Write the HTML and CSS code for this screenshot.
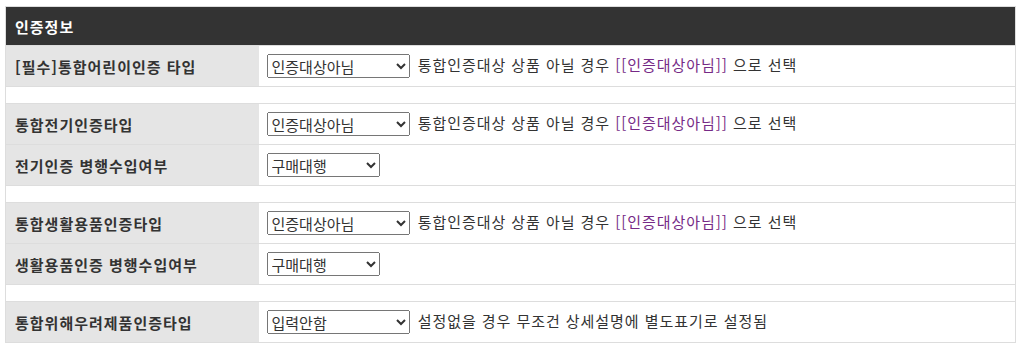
FILE: index.html
```html
<!DOCTYPE html>
<html lang="ko">
<head>
  <meta charset="UTF-8" />
  <meta name="viewport" content="width=device-width, initial-scale=1.0"/>
  <title>인증정보</title>
  <link rel="stylesheet" href="styles.css">
</head>
<body>

  <table class="cert-table">
    <tr>
      <th colspan="2" class="cert-head">인증정보</th>
    </tr>

    <tr>
      <td class="label">[필수]통합어린이인증 타입</td>
      <td class="value">
        <select class="sel">
          <option>인증대상아님</option>
        </select>
        통합인증대상 상품 아닐 경우 <span class="hint">[[인증대상아님]]</span> 으로 선택
      </td>
    </tr>
    <tr class="gap"><td colspan="2"></td></tr>

    <tr>
      <td class="label">통합전기인증타입</td>
      <td class="value">
        <select class="sel">
          <option>인증대상아님</option>
        </select>
        통합인증대상 상품 아닐 경우 <span class="hint">[[인증대상아님]]</span> 으로 선택
      </td>
    </tr>
    <tr>
      <td class="label">전기인증 병행수입여부</td>
      <td class="value">
        <select class="sel sel-short">
          <option>구매대행</option>
        </select>
      </td>
    </tr>
    <tr class="gap"><td colspan="2"></td></tr>

    <tr>
      <td class="label">통합생활용품인증타입</td>
      <td class="value">
        <select class="sel">
          <option>인증대상아님</option>
        </select>
        통합인증대상 상품 아닐 경우 <span class="hint">[[인증대상아님]]</span> 으로 선택
      </td>
    </tr>
    <tr>
      <td class="label">생활용품인증 병행수입여부</td>
      <td class="value">
        <select class="sel sel-short">
          <option>구매대행</option>
        </select>
      </td>
    </tr>
    <tr class="gap"><td colspan="2"></td></tr>

    <tr>
      <td class="label">통합위해우려제품인증타입</td>
      <td class="value">
        <select class="sel">
          <option>입력안함</option>
        </select>
        설정없을 경우 무조건 상세설명에 별도표기로 설정됨
      </td>
    </tr>
  </table>

</body>
</html>
```

FILE: styles.css
```css
* {
  margin: 0;
  padding: 0;
  box-sizing: border-box;
}
body {
  background: #fff;
  color: #333;
  font-family: "Noto Sans CJK KR", "Noto Sans", sans-serif;
  font-size: 15px;
  padding: 6px 0 0 5px;
}
.cert-table {
  width: 1011px;
  border-collapse: collapse;
  border: 1px solid #ddd;
}
.cert-head {
  background: #333;
  color: #fff;
  text-align: left;
  font-weight: bold;
  font-size: 15px;
  letter-spacing: 1px;
  height: 39px;
  padding: 0 9px;
}
.cert-table td {
  border-top: 1px solid #ddd;
  height: 41px;
  vertical-align: middle;
}
.label {
  width: 253px;
  background: #e5e5e5;
  font-weight: bold;
  letter-spacing: 1px;
  padding: 0 9px;
  color: #333;
}
.value {
  padding: 0 8px;
  color: #333;
  letter-spacing: 0.95px;
  white-space: nowrap;
}
.hint {
  color: #762a86;
}
.gap td {
  height: 17px;
  background: #fff;
}
.sel {
  width: 143px;
  height: 24px;
  font-family: inherit;
  font-size: 15px;
  letter-spacing: 0;
  color: #333;
  vertical-align: middle;
  margin-right: 3px;
}
.sel-short {
  width: 113px;
}
```
